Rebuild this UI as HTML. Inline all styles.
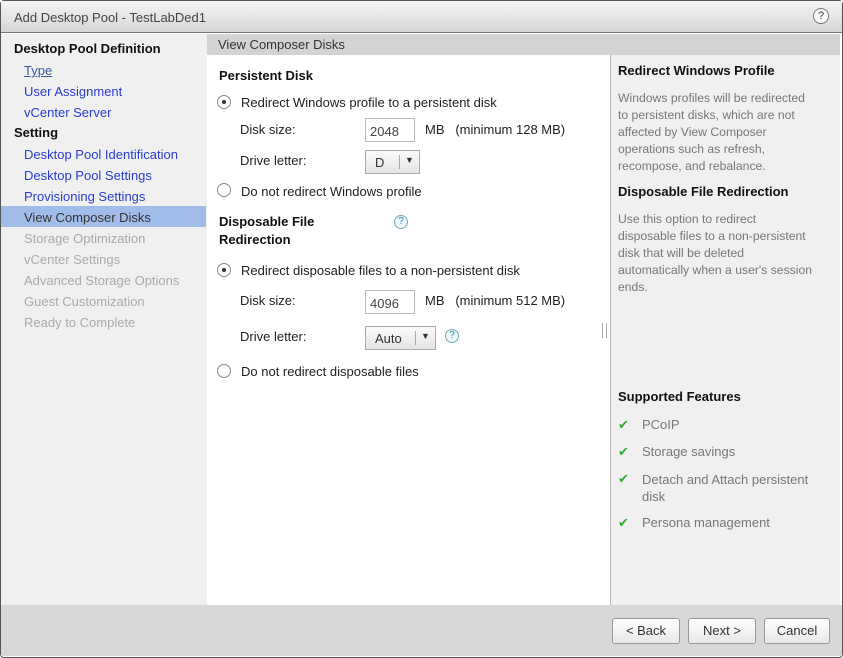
<!DOCTYPE html>
<html><head><style>
*{margin:0;padding:0;box-sizing:border-box}
body{width:843px;height:658px;background:#fff;font-family:"Liberation Sans","DejaVu Sans",sans-serif;font-size:13px;color:#222;position:relative;overflow:hidden}
.a{position:absolute;white-space:nowrap}
.b{font-weight:bold;color:#111}
.l{color:#2a3cd6}
.g{color:#aaa}
.r{color:#777}
.p{font-size:12.2px;line-height:17px}
.rad{position:absolute;width:14px;height:14px;border:1px solid #888;border-radius:50%;background:#fff}
.rad.on::after{content:"";position:absolute;left:4px;top:4px;width:4px;height:4px;border-radius:50%;background:#333}
.inp{position:absolute;border:1px solid #bbb;background:#fff;height:24px;padding:5px 4px;color:#444}
.sel{position:absolute;border:1px solid #aaa;background:linear-gradient(#fbfbfb,#e4e4e4);height:24px;color:#333}
.q{position:absolute;width:14px;height:14px;border:1px solid #7ab;border-radius:50%;font-size:10px;color:#38a;text-align:center;line-height:12px;background:#eef6fa}
.btn{position:absolute;top:618px;height:26px;border:1px solid #999;border-radius:3px;background:linear-gradient(#fff,#e8e8e8);text-align:center;line-height:24px;color:#333}
.ck{position:absolute;color:#3a3;font-size:13px;font-weight:bold}
</style></head><body>
<div style="position:absolute;left:0;top:0;width:843px;height:658px;border:1px solid #555;border-radius:4px"></div>
<div class="a" style="left:1px;top:1px;width:841px;height:32px;background:linear-gradient(#f4f4f4,#d6d6d6);border-bottom:1px solid #777"></div>
<div class="a" style="left:14px;top:10px;color:#444">Add Desktop Pool - TestLabDed1</div>
<div class="a" style="left:813px;top:8px;width:16px;height:16px;border:1px solid #777;border-radius:50%;text-align:center;font-size:11px;line-height:14px;color:#444;background:#fafafa">?</div>
<div class="a" style="left:1px;top:34px;width:206px;height:571px;background:#f0f0f0"></div>
<div class="a" style="left:207px;top:34px;width:633px;height:21px;background:#d3d3d3"></div>
<div class="a" style="left:218px;top:37px;color:#333">View Composer Disks</div>
<div class="a" style="left:610px;top:55px;width:230px;height:550px;background:#f0f0f0;border-left:1px solid #bbb"></div>
<div class="a" style="left:1px;top:605px;width:841px;height:51px;background:#d8d8d8"></div>
<div class="a" style="left:1px;top:206px;width:205px;height:21px;background:#a0bce8"></div>
<div class="a b" style="left:14px;top:41px">Desktop Pool Definition</div>
<div class="a l" style="left:24px;top:63px;text-decoration:underline;color:#3a5a9a">Type</div>
<div class="a l" style="left:24px;top:84px">User Assignment</div>
<div class="a l" style="left:24px;top:105px">vCenter Server</div>
<div class="a b" style="left:14px;top:125px">Setting</div>
<div class="a l" style="left:24px;top:147px">Desktop Pool Identification</div>
<div class="a l" style="left:24px;top:168px">Desktop Pool Settings</div>
<div class="a l" style="left:24px;top:189px">Provisioning Settings</div>
<div class="a" style="left:24px;top:210px;color:#333">View Composer Disks</div>
<div class="a g" style="left:24px;top:231px">Storage Optimization</div>
<div class="a g" style="left:24px;top:252px">vCenter Settings</div>
<div class="a g" style="left:24px;top:273px">Advanced Storage Options</div>
<div class="a g" style="left:24px;top:294px">Guest Customization</div>
<div class="a g" style="left:24px;top:315px">Ready to Complete</div>

<div class="a b" style="left:219px;top:68px">Persistent Disk</div>
<div class="rad on" style="left:217px;top:95px"></div>
<div class="a" style="left:241px;top:95px">Redirect Windows profile to a persistent disk</div>
<div class="a" style="left:240px;top:122px">Disk size:</div>
<div class="inp" style="left:365px;top:118px;width:50px">2048</div>
<div class="a" style="left:425px;top:122px">MB &nbsp;&nbsp;(minimum 128 MB)</div>
<div class="a" style="left:240px;top:153px">Drive letter:</div>
<div class="sel" style="left:365px;top:150px;width:55px"><span class="a" style="left:9px;top:4px">D</span><span class="a" style="left:33px;top:4px;height:14px;border-left:1px solid #aaa"></span><span class="a" style="left:39px;top:4px;font-size:9px">▼</span></div>
<div class="rad" style="left:217px;top:183px"></div>
<div class="a" style="left:241px;top:184px">Do not redirect Windows profile</div>
<div class="a b" style="left:219px;top:214px">Disposable File</div>
<div class="a b" style="left:219px;top:232px">Redirection</div>
<div class="q" style="left:394px;top:215px">?</div>
<div class="rad on" style="left:217px;top:263px"></div>
<div class="a" style="left:241px;top:263px">Redirect disposable files to a non-persistent disk</div>
<div class="a" style="left:240px;top:293px">Disk size:</div>
<div class="inp" style="left:365px;top:290px;width:50px">4096</div>
<div class="a" style="left:425px;top:293px">MB &nbsp;&nbsp;(minimum 512 MB)</div>
<div class="a" style="left:240px;top:329px">Drive letter:</div>
<div class="sel" style="left:365px;top:326px;width:71px"><span class="a" style="left:9px;top:4px">Auto</span><span class="a" style="left:49px;top:4px;height:14px;border-left:1px solid #aaa"></span><span class="a" style="left:55px;top:4px;font-size:9px">▼</span></div>
<div class="q" style="left:445px;top:329px">?</div>
<div class="a" style="left:602px;top:323px;width:5px;height:15px;border-left:1px solid #aaa;border-right:1px solid #aaa"></div>
<div class="rad" style="left:217px;top:364px"></div>
<div class="a" style="left:241px;top:364px">Do not redirect disposable files</div>

<div class="a b" style="left:618px;top:63px">Redirect Windows Profile</div>
<div class="a r p" style="left:618px;top:90px">Windows profiles will be redirected<br>to persistent disks, which are not<br>affected by View Composer<br>operations such as refresh,<br>recompose, and rebalance.</div>
<div class="a b" style="left:618px;top:184px">Disposable File Redirection</div>
<div class="a r p" style="left:618px;top:211px">Use this option to redirect<br>disposable files to a non-persistent<br>disk that will be deleted<br>automatically when a user's session<br>ends.</div>
<div class="a b" style="left:618px;top:389px">Supported Features</div>
<div class="ck" style="left:618px;top:417px">✔</div><div class="a r" style="left:642px;top:417px">PCoIP</div>
<div class="ck" style="left:618px;top:444px">✔</div><div class="a r" style="left:642px;top:444px">Storage savings</div>
<div class="ck" style="left:618px;top:471px">✔</div><div class="a r" style="left:642px;top:471px;line-height:17px">Detach and Attach persistent<br>disk</div>
<div class="ck" style="left:618px;top:515px">✔</div><div class="a r" style="left:642px;top:515px">Persona management</div>

<div class="btn" style="left:612px;width:68px">&lt; Back</div>
<div class="btn" style="left:688px;width:68px">Next &gt;</div>
<div class="btn" style="left:764px;width:66px">Cancel</div>
</body></html>
